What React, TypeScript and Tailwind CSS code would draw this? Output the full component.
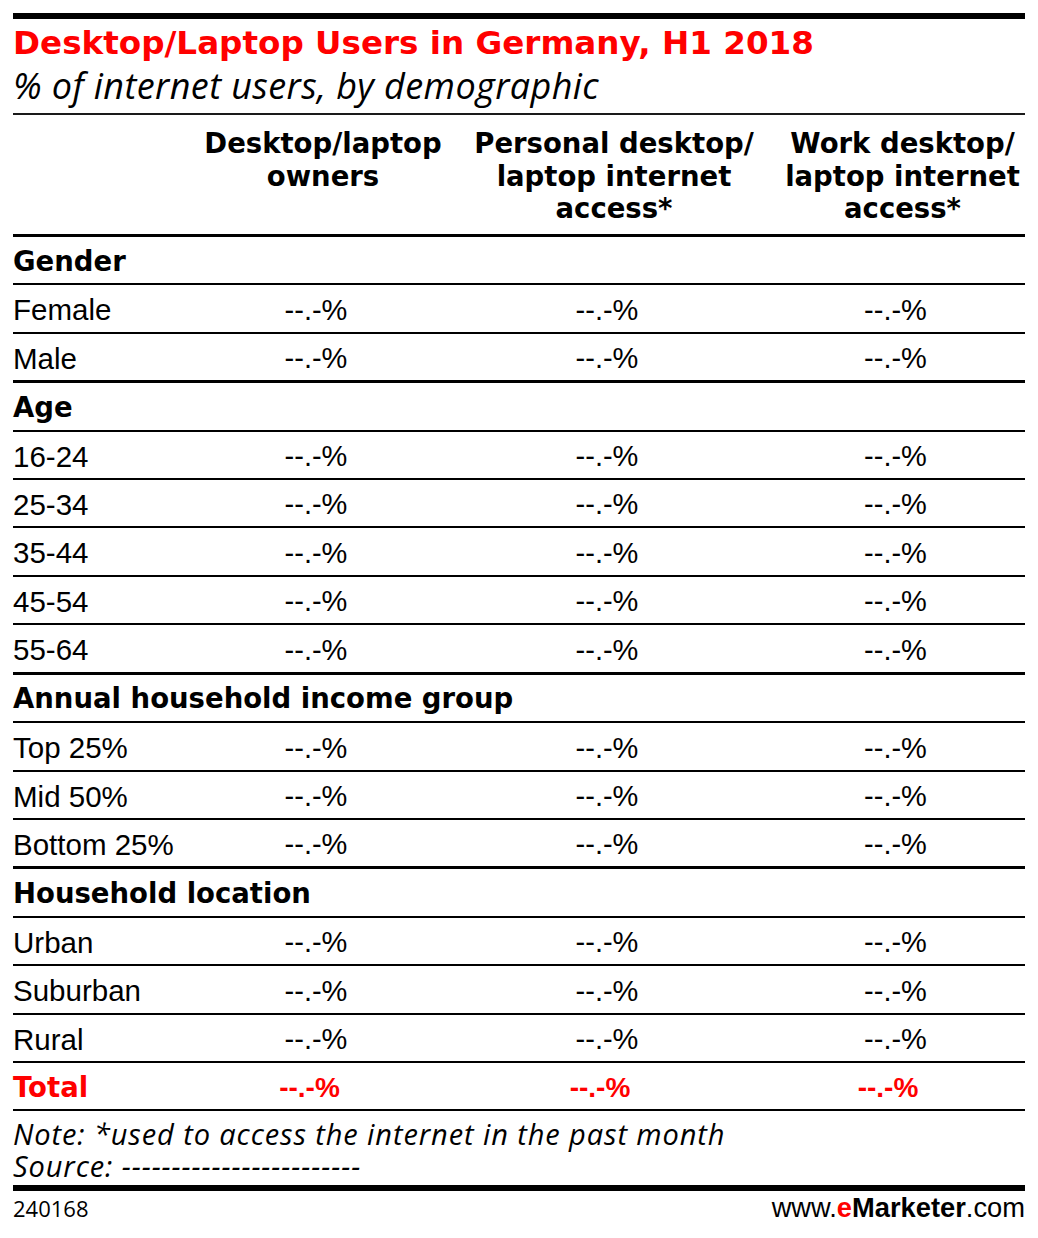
import React from 'react';

type Row = {
  label: string;
  kind: 'group' | 'item' | 'total';
  thick?: boolean;
};

const rows: Row[] = [
  { label: 'Gender', kind: 'group' },
  { label: 'Female', kind: 'item' },
  { label: 'Male', kind: 'item', thick: true },
  { label: 'Age', kind: 'group' },
  { label: '16-24', kind: 'item' },
  { label: '25-34', kind: 'item' },
  { label: '35-44', kind: 'item' },
  { label: '45-54', kind: 'item' },
  { label: '55-64', kind: 'item', thick: true },
  { label: 'Annual household income group', kind: 'group' },
  { label: 'Top 25%', kind: 'item' },
  { label: 'Mid 50%', kind: 'item' },
  { label: 'Bottom 25%', kind: 'item', thick: true },
  { label: 'Household location', kind: 'group' },
  { label: 'Urban', kind: 'item' },
  { label: 'Suburban', kind: 'item' },
  { label: 'Rural', kind: 'item' },
  { label: 'Total', kind: 'total' },
];

const VALUE = '--.-%';

const TableRow = ({ row }: { row: Row }) => {
  const border = row.thick
    ? 'h-[49.5px] border-b-[3px] border-black'
    : 'h-[48.4px] border-b-2 border-black';

  if (row.kind === 'group') {
    return (
      <div className={`flex items-center pt-[2px] ${border}`}>
        <span className="font-['DejaVu_Sans',sans-serif] font-bold text-[27.5px] text-black whitespace-nowrap">
          {row.label}
        </span>
      </div>
    );
  }

  if (row.kind === 'total') {
    const totalCls = "text-center font-['Liberation_Sans',Arial,sans-serif] font-bold text-[28px] text-[#ff0000]";
    return (
      <div className={`grid grid-cols-[167px_286px_296px_263px] items-center pt-[3px] ${border}`}>
        <span className="font-['DejaVu_Sans',sans-serif] font-bold text-[27.5px] text-[#ff0000]">{row.label}</span>
        <span className={`pr-[27px] ${totalCls}`}>{VALUE}</span>
        <span className={`pr-[28px] ${totalCls}`}>{VALUE}</span>
        <span className={`pr-[11px] ${totalCls}`}>{VALUE}</span>
      </div>
    );
  }

  const valueCls = "text-center font-['Liberation_Sans',Arial,sans-serif] text-[29px] text-black";

  return (
    <div className={`grid grid-cols-[167px_286px_296px_263px] items-center pt-[3px] ${border}`}>
      <span className="font-['Liberation_Sans',Arial,sans-serif] text-[29.5px] text-black whitespace-nowrap">{row.label}</span>
      <span className={`pr-[14px] ${valueCls}`}>{VALUE}</span>
      <span className={`pr-[14px] ${valueCls}`}>{VALUE}</span>
      <span className={`pl-[4px] ${valueCls}`}>{VALUE}</span>
    </div>
  );
};

export default function App() {
  return (
    <div className="w-[1038px] h-[1238px] bg-white px-[13px] pt-[13px]">
      <div className="h-[6px] bg-black" />

      {/* Title */}
      <div className="mt-[5px] font-['DejaVu_Sans',sans-serif] font-bold text-[32.6px] leading-[38px] text-[#ff0000] whitespace-nowrap">
        Desktop/Laptop Users in Germany, H1 2018
      </div>
      <div className="mt-[3px] font-['Open_Sans',sans-serif] italic text-[36px] tracking-[0.4px] leading-[41px] text-black whitespace-nowrap">
        % of internet users, by demographic
      </div>
      <div className="mt-[7px] h-[2px] bg-[#1a1a1a]" />

      {/* Column header */}
      <div className="grid grid-cols-[167px_286px_296px_263px] h-[122px] pt-[12px] border-b-[3px] border-black font-['DejaVu_Sans',sans-serif] font-bold text-[27.5px] leading-[32.5px] text-black">
        <div />
        <div className="text-center whitespace-nowrap">
          Desktop/laptop
          <br />
          owners
        </div>
        <div className="text-center whitespace-nowrap">
          Personal desktop/
          <br />
          laptop internet
          <br />
          access*
        </div>
        <div className="text-center pl-[18px] whitespace-nowrap">
          Work desktop/
          <br />
          laptop internet
          <br />
          access*
        </div>
      </div>

      {/* Body */}
      <div>
        {rows.map((r) => (
          <TableRow key={r.label} row={r} />
        ))}
      </div>

      {/* Notes */}
      <div className="pt-[7px] font-['Open_Sans',sans-serif] italic text-[29px] tracking-[0.9px] text-black whitespace-nowrap">
        <div className="h-[31.5px] leading-[31.5px]">Note: *used to access the internet in the past month</div>
        <div className="h-[31.5px] leading-[31.5px]">Source: ------------------------</div>
      </div>
      <div className="mt-[4px] h-[6px] bg-black" />

      {/* Footer */}
      <div className="flex items-start justify-between pt-[4px]">
        <span className="font-['Open_Sans',sans-serif] text-[22px] leading-[26px] text-black">240168</span>
        <span className="font-['Liberation_Sans',Arial,sans-serif] text-[27.3px] leading-[26px] text-black whitespace-nowrap">
          www.
          <span className="font-bold">
            <span className="text-[#ff0000]">e</span>Marketer
          </span>
          .com
        </span>
      </div>
    </div>
  );
}
